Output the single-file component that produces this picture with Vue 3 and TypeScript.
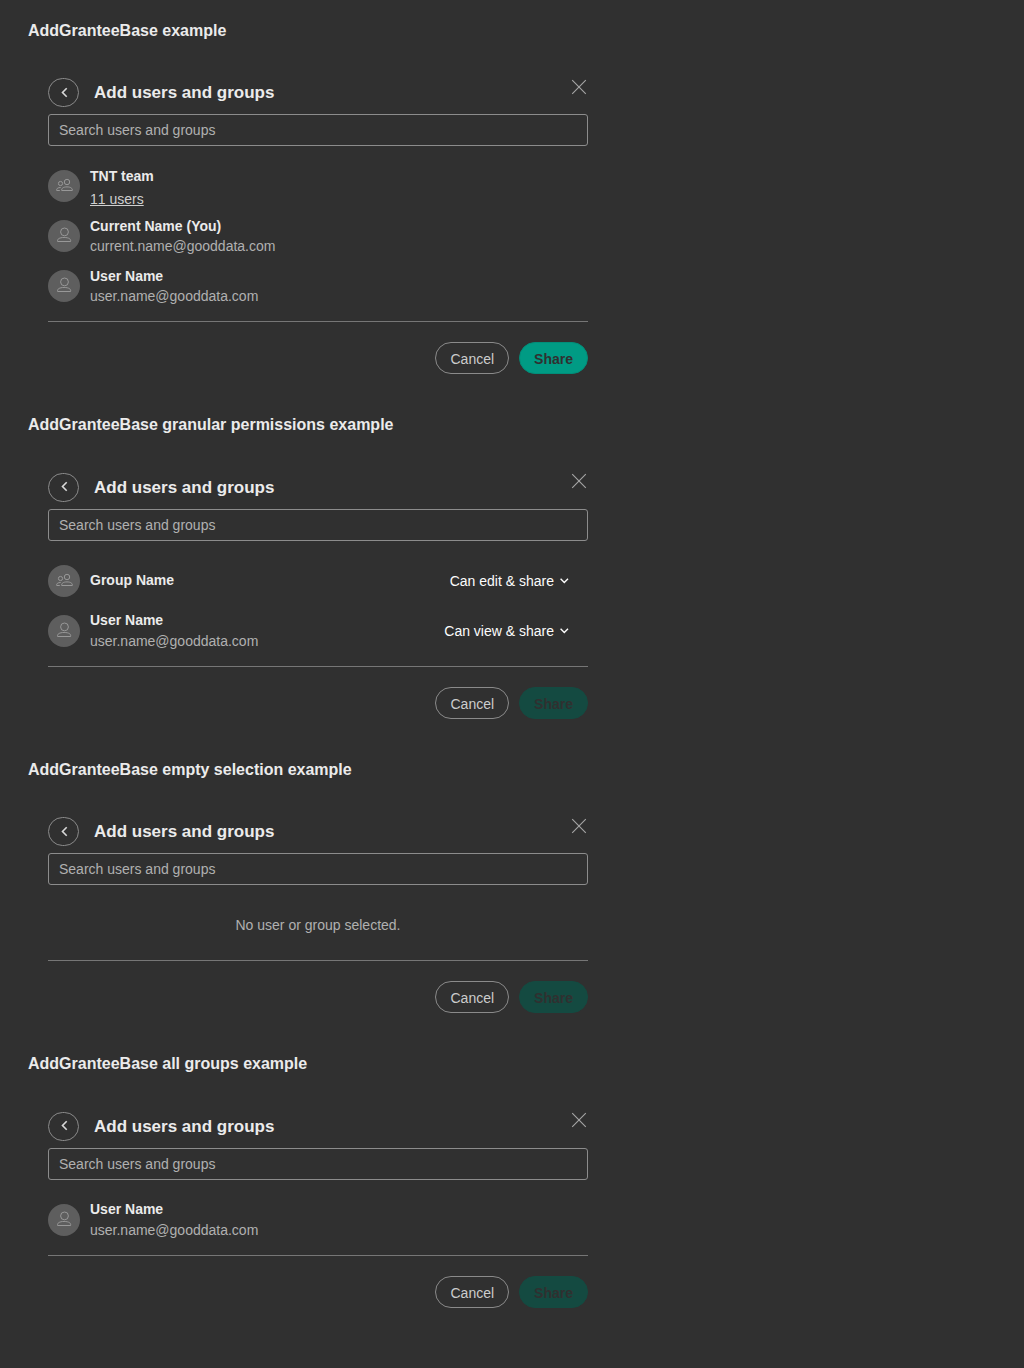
<script setup lang="ts">
interface Grantee {
  kind: "group" | "user";
  name: string;
  email?: string;
  members?: string;
  permission?: string;
}

interface Example {
  title: string;
  grantees: Grantee[];
  canShare: boolean;
}

const user: Grantee = { kind: "user", name: "User Name", email: "user.name@gooddata.com" };

const examples: Example[] = [
  {
    title: "AddGranteeBase example",
    canShare: true,
    grantees: [
      { kind: "group", name: "TNT team", members: "11 users" },
      { kind: "user", name: "Current Name (You)", email: "current.name@gooddata.com" },
      user,
    ],
  },
  {
    title: "AddGranteeBase granular permissions example",
    canShare: false,
    grantees: [
      { kind: "group", name: "Group Name", permission: "Can edit & share" },
      { ...user, permission: "Can view & share" },
    ],
  },
  { title: "AddGranteeBase empty selection example", canShare: false, grantees: [] },
  { title: "AddGranteeBase all groups example", canShare: false, grantees: [user] },
];
</script>

<template>
  <main class="page">
    <section v-for="example in examples" :key="example.title" class="example">
      <h4 class="example-title">{{ example.title }}</h4>
      <div class="dialog">
        <header class="header">
          <button class="back" aria-label="Back">
            <svg width="10" height="14" viewBox="0 0 10 14">
              <path d="M6.7 2.3 2.5 6.5l4.2 4.2" fill="none" stroke="currentColor" stroke-width="1.6" />
            </svg>
          </button>
          <h3 class="heading">Add users and groups</h3>
          <button class="close" aria-label="Close">
            <svg width="16" height="16" viewBox="0 0 16 16">
              <path d="M1.2 1.2l13.6 13.6M14.8 1.2 1.2 14.8" fill="none" stroke="currentColor" stroke-width="1.15" />
            </svg>
          </button>
        </header>
        <input class="search" type="text" placeholder="Search users and groups" />
        <div class="list">
          <div v-for="grantee in example.grantees" :key="grantee.name" class="row">
            <span class="avatar">
              <svg
                v-if="grantee.kind === 'group'"
                width="18"
                height="14"
                viewBox="0 0 18 14"
                fill="none"
                stroke="currentColor"
                stroke-linejoin="round"
              >
                <circle cx="5.5" cy="5.5" r="2.1" />
                <circle cx="12" cy="4" r="2.7" />
                <path d="M6.7 12.5C6.3 10.3 8.4 8.9 12 8.9s5.700 1.400 5.300 3.600z" />
                <path d="M4.800 12.500H1.700c-.4-1.900 1.100-3 4-3" />
              </svg>
              <svg
                v-else
                width="16"
                height="16"
                viewBox="0 0 16 16"
                fill="none"
                stroke="currentColor"
                stroke-linejoin="round"
              >
                <circle cx="8.5" cy="4.900" r="3.900" />
                <path d="M1.600 14.500C1 12.100 3.300 10.500 8.100 10.500s7.100 1.600 6.500 4z" />
              </svg>
            </span>
            <div class="info" :class="{ grouped: grantee.members }">
              <div class="name">{{ grantee.name }}</div>
              <div v-if="grantee.members" class="members">{{ grantee.members }}</div>
              <div v-if="grantee.email" class="email">{{ grantee.email }}</div>
            </div>
            <div v-if="grantee.permission" class="permission">
              <span>{{ grantee.permission }}</span>
              <svg width="10" height="8" viewBox="0 0 10 8">
                <path d="M.6 1.700 4.300 5.400 8 1.700" fill="none" stroke="currentColor" stroke-width="1.400" />
              </svg>
            </div>
          </div>
          <div v-if="!example.grantees.length" class="empty">No user or group selected.</div>
        </div>
        <footer class="footer">
          <button class="button cancel">Cancel</button>
          <button class="button share" :disabled="!example.canShare">Share</button>
        </footer>
      </div>
    </section>
  </main>
</template>

<style>
body {
  background: #303030;
}
</style>

<style scoped>
.page {
  box-sizing: border-box;
  min-height: 1368px;
  padding: 20px 28px 0;
  background: #303030;
  color: #ebebeb;
  font: 14px/20px "Liberation Sans", Arial, sans-serif;
}
.example {
  margin-bottom: 40px;
}
.example-title {
  margin: 0;
  font-size: 16px;
  line-height: 22.4px;
}
.dialog {
  width: 540px;
  margin: 0 20px;
  padding-top: 36px;
}
button {
  box-sizing: border-box;
  margin: 0;
  font-family: inherit;
}
.header {
  display: flex;
  align-items: flex-start;
  height: 36px;
}
.back {
  display: flex;
  align-items: flex-start;
  width: 31px;
  height: 29px;
  padding: 6.6px 0 0 11px;
  border: 1px solid #8a8a8a;
  border-radius: 15px;
  background: none;
  color: #d8d8d8;
}
svg {
  display: block;
  flex: none;
}
.heading {
  flex: 1;
  margin: 0 0 0 15px;
  font-size: 17px;
  line-height: 29px;
}
.close {
  padding: 0;
  margin: 0.5px 1px 0 0;
  border: 0;
  background: none;
  color: #a4a4a4;
}
.search {
  display: block;
  box-sizing: border-box;
  width: 100%;
  height: 32px;
  padding: 0 10px;
  border: 1px solid #8c8c8c;
  border-radius: 3px;
  background: none;
  color: inherit;
  font: inherit;
}
.search::placeholder {
  color: #b0b0b0;
}
.list {
  padding: 15px 0 10px;
  border-bottom: 1px solid #767676;
}
.row {
  display: flex;
  align-items: center;
  height: 50px;
}
.avatar {
  display: flex;
  box-sizing: border-box;
  align-items: center;
  justify-content: center;
  width: 32px;
  height: 32px;
  margin-right: 10px;
  padding-bottom: 2px;
  border-radius: 50%;
  background: #5e5e5e;
  color: #989898;
}
.info {
  flex: 1;
}
.info.grouped {
  padding-top: 2px;
}
.name {
  margin: -0.4px 0 0.4px;
  font-weight: bold;
}
.members {
  padding-top: 3px;
  color: #cfcfcf;
  font-kerning: none;
  text-decoration: underline;
}
.email,
.empty {
  color: #b0b0b0;
}
.permission {
  display: flex;
  align-items: center;
  gap: 6px;
  margin-right: 18px;
  color: #fcfcfc;
}
.empty {
  line-height: 50px;
  text-align: center;
}
.footer {
  display: flex;
  justify-content: flex-end;
  gap: 10px;
  padding-top: 20px;
}
.button {
  height: 32px;
  padding: 2px 14px 0;
  border: 1px solid #8a8a8a;
  border-radius: 16px;
  background: none;
  color: #cccccc;
  font-size: 14px;
}
.share {
  border-color: #028d79;
  background: #009b84;
  color: #303030;
  font-weight: bold;
}
.share:disabled {
  border-color: #144a41;
  background: #144a41;
}
</style>
